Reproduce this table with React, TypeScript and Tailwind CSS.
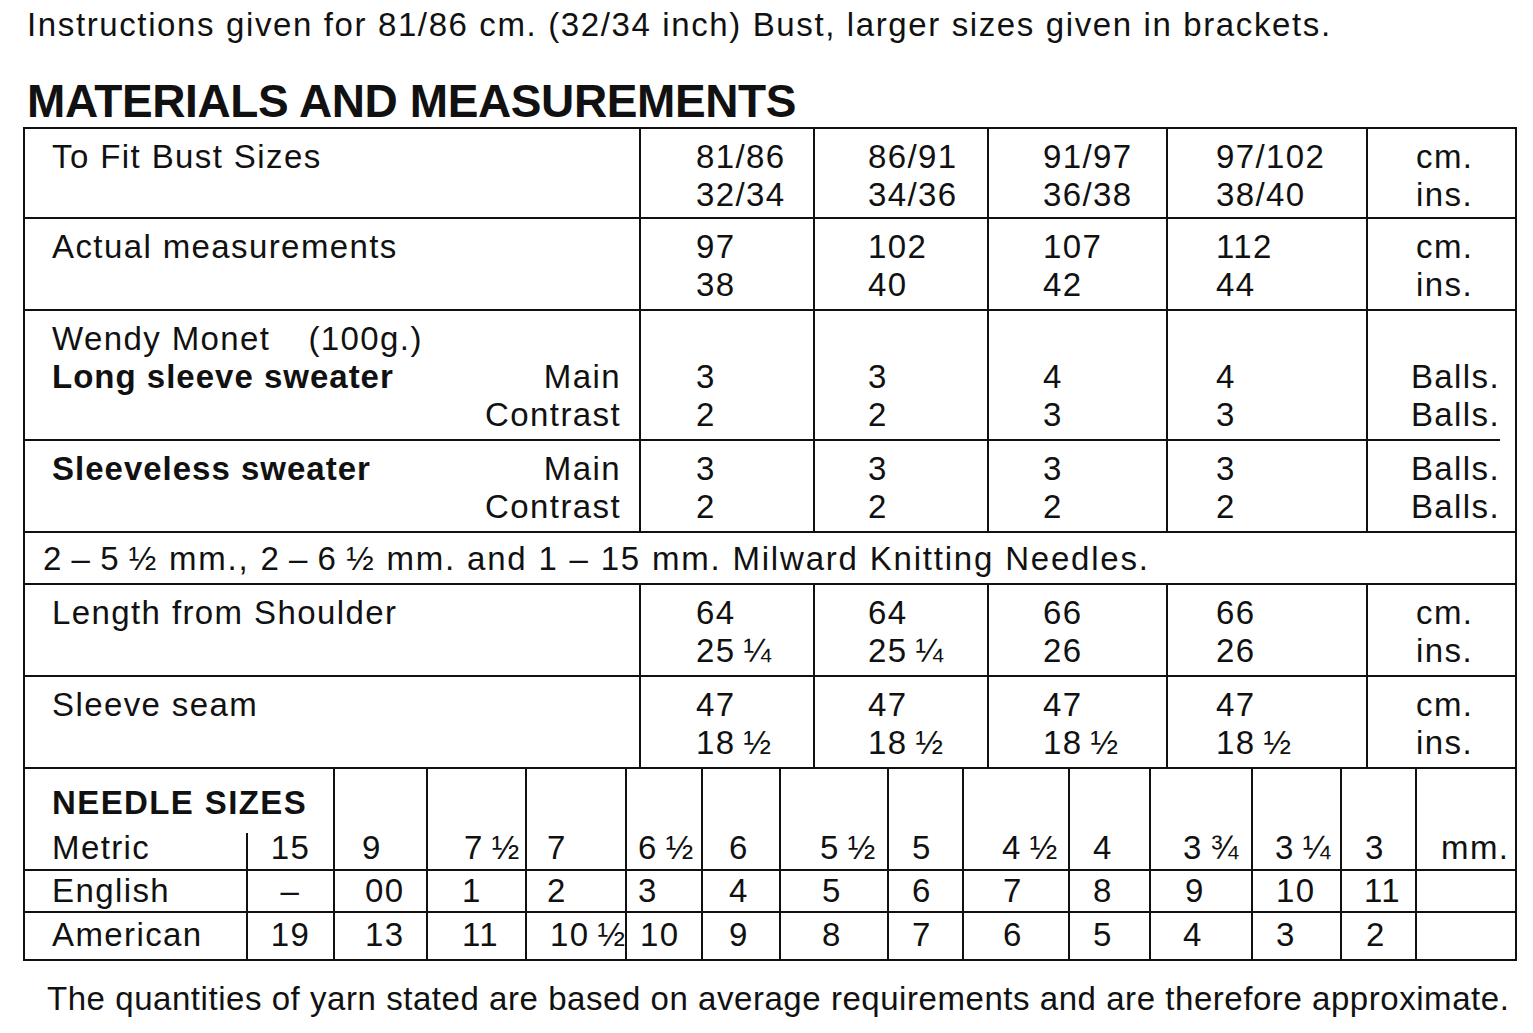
import React from "react";

const sizePl = ["pl-[55px]", "pl-[53px]", "pl-[54px]", "pl-[48px]"];

function MeasureRow({
  label,
  vals,
  h,
}: {
  label: string;
  vals: [string, string][];
  h: string;
}) {
  return (
    <div className={`grid grid-cols-[616px_174px_174px_179px_200px_1fr] border-b-2 border-[#111] ${h}`}>
      <div className="border-r-2 border-[#111] pt-[9px] pl-[27px]">{label}</div>
      {vals.map((v, i) => (
        <div key={i} className={`border-r-2 border-[#111] pt-[9px] ${sizePl[i]}`}>
          <div>{v[0]}</div>
          <div>{v[1]}</div>
        </div>
      ))}
      <div className="pt-[9px] pl-[48px]">
        <div>cm.</div>
        <div>ins.</div>
      </div>
    </div>
  );
}

type Cell = { t: string; c: string };

const metric: Cell[] = [
  { t: "9", c: "pl-[27px]" },
  { t: "7\u2009½", c: "pl-[36px]" },
  { t: "7", c: "pl-[20px]" },
  { t: "6\u2009½", c: "pl-[11px]" },
  { t: "6", c: "pl-[26px]" },
  { t: "5\u2009½", c: "pl-[39px]" },
  { t: "5", c: "pl-[23px]" },
  { t: "4\u2009½", c: "pl-[38px]" },
  { t: "4", c: "pl-[23px]" },
  { t: "3\u2009¾", c: "pl-[32px]" },
  { t: "3\u2009¼", c: "pl-[22px]" },
  { t: "3", c: "pl-[23px]" },
  { t: "mm.", c: "pl-[24px]" },
];

const english: Cell[] = [
  { t: "00", c: "pl-[30px]" },
  { t: "1", c: "pl-[34px]" },
  { t: "2", c: "pl-[20px]" },
  { t: "3", c: "pl-[11px]" },
  { t: "4", c: "pl-[26px]" },
  { t: "5", c: "pl-[41px]" },
  { t: "6", c: "pl-[23px]" },
  { t: "7", c: "pl-[39px]" },
  { t: "8", c: "pl-[23px]" },
  { t: "9", c: "pl-[34px]" },
  { t: "10", c: "pl-[23px]" },
  { t: "11", c: "pl-[22px]" },
  { t: "", c: "pl-[24px]" },
];

const american: Cell[] = [
  { t: "13", c: "pl-[30px]" },
  { t: "11", c: "pl-[34px]" },
  { t: "10\u2009½", c: "pl-[23px]" },
  { t: "10", c: "pl-[13px]" },
  { t: "9", c: "pl-[26px]" },
  { t: "8", c: "pl-[41px]" },
  { t: "7", c: "pl-[23px]" },
  { t: "6", c: "pl-[39px]" },
  { t: "5", c: "pl-[23px]" },
  { t: "4", c: "pl-[32px]" },
  { t: "3", c: "pl-[23px]" },
  { t: "2", c: "pl-[24px]" },
  { t: "", c: "pl-[24px]" },
];

export default function App() {
  return (
    <div className="min-h-[1033px] w-[1533px] bg-white text-[#111] font-['Liberation_Sans',Arial,Helvetica,sans-serif]">
      <p className="pt-[6px] pl-[27px] text-[33px] leading-[38px] tracking-[1.62px] whitespace-nowrap">
        Instructions given for 81/86 cm. (32/34 inch) Bust, larger sizes given in brackets.
      </p>
      <h1 className="mt-[32px] pl-[27px] text-[46px] leading-[50px] font-bold tracking-[-0.4px] whitespace-nowrap">
        MATERIALS AND MEASUREMENTS
      </h1>

      <div className="mt-[1px] ml-[23px] w-[1494px] border-2 border-[#111] text-[33px] leading-[38px] tracking-[1.4px] whitespace-nowrap">
        <MeasureRow
          label="To Fit Bust Sizes"
          h="h-[90px]"
          vals={[
            ["81/86", "32/34"],
            ["86/91", "34/36"],
            ["91/97", "36/38"],
            ["97/102", "38/40"],
          ]}
        />
        <MeasureRow
          label="Actual measurements"
          h="h-[92px]"
          vals={[
            ["97", "38"],
            ["102", "40"],
            ["107", "42"],
            ["112", "44"],
          ]}
        />

        {/* Wendy Monet / Long sleeve */}
        <div className="grid h-[130px] grid-cols-[616px_174px_174px_179px_200px_1fr]">
          <div className="border-r-2 border-b-2 border-[#111] pt-[9px] pl-[27px] pr-[18px]">
            <div>
              Wendy Monet<span className="ml-[38px]">(100g.)</span>
            </div>
            <div className="flex justify-between">
              <span className="font-bold tracking-[1px]">Long sleeve sweater</span>
              <span>Main</span>
            </div>
            <div className="text-right">Contrast</div>
          </div>
          {[
            ["3", "2"],
            ["3", "2"],
            ["4", "3"],
            ["4", "3"],
          ].map((v, i) => (
            <div key={i} className={`border-r-2 border-b-2 border-[#111] pt-[47px] ${sizePl[i]}`}>
              <div>{v[0]}</div>
              <div>{v[1]}</div>
            </div>
          ))}
          <div className="flex flex-col">
            <div className="pt-[47px] pr-[15px] text-right">
              <div>Balls.</div>
              <div>Balls.</div>
            </div>
            <div className="mt-auto mr-[15px] h-[2px] bg-[#111]" />
          </div>
        </div>

        {/* Sleeveless */}
        <div className="grid h-[92px] grid-cols-[616px_174px_174px_179px_200px_1fr] border-b-2 border-[#111]">
          <div className="border-r-2 border-[#111] pt-[9px] pl-[27px] pr-[18px]">
            <div className="flex justify-between">
              <span className="font-bold tracking-[1px]">Sleeveless sweater</span>
              <span>Main</span>
            </div>
            <div className="text-right">Contrast</div>
          </div>
          {[
            ["3", "2"],
            ["3", "2"],
            ["3", "2"],
            ["3", "2"],
          ].map((v, i) => (
            <div key={i} className={`border-r-2 border-[#111] pt-[9px] ${sizePl[i]}`}>
              <div>{v[0]}</div>
              <div>{v[1]}</div>
            </div>
          ))}
          <div className="pt-[9px] pr-[15px] text-right">
            <div>Balls.</div>
            <div>Balls.</div>
          </div>
        </div>

        {/* Needles text */}
        <div className="h-[52px] border-b-2 border-[#111] pt-[7px] pl-[18px] tracking-[1.8px]">
          2{"\u2009–\u2009"}5{"\u2009"}½ mm., 2{"\u2009–\u2009"}6{"\u2009"}½ mm. and 1 – 15 mm. Milward Knitting Needles.
        </div>

        <MeasureRow
          label="Length from Shoulder"
          h="h-[92px]"
          vals={[
            ["64", "25\u2009¼"],
            ["64", "25\u2009¼"],
            ["66", "26"],
            ["66", "26"],
          ]}
        />
        <MeasureRow
          label="Sleeve seam"
          h="h-[92px]"
          vals={[
            ["47", "18\u2009½"],
            ["47", "18\u2009½"],
            ["47", "18\u2009½"],
            ["47", "18\u2009½"],
          ]}
        />

        {/* Needle sizes */}
        <div className="grid grid-cols-[223px_87px_93px_99px_100px_76px_78px_108px_75px_106px_81px_102px_89px_75px_1fr] grid-rows-[64px_38px_42px_46px] leading-[34px]">
          <div className="col-span-2 col-start-1 row-start-1 border-r-2 border-[#111] pt-[15px] pl-[27px] font-bold leading-[38px]">
            NEEDLE SIZES
          </div>
          {metric.map((m, i) => (
            <div
              key={"m" + i}
              className={`row-span-2 row-start-1 flex items-end border-b-2 border-[#111] pb-[4px] ${m.c} ${
                i < metric.length - 1 ? "border-r-2" : ""
              }`}
            >
              {m.t}
            </div>
          ))}
          <div className="col-start-1 row-start-2 flex items-end border-r-2 border-b-2 border-[#111] pb-[4px] pl-[27px]">
            Metric
          </div>
          <div className="col-start-2 row-start-2 flex items-end justify-center border-r-2 border-b-2 border-[#111] pb-[4px]">
            15
          </div>

          <div className="col-start-1 row-start-3 flex items-end border-r-2 border-b-2 border-[#111] pb-[3px] pl-[27px]">
            English
          </div>
          <div className="col-start-2 row-start-3 flex items-end justify-center border-r-2 border-b-2 border-[#111] pb-[3px]">
            –
          </div>
          {english.map((m, i) => (
            <div
              key={"e" + i}
              className={`row-start-3 flex items-end border-b-2 border-[#111] pb-[3px] ${m.c} ${
                i < english.length - 1 ? "border-r-2" : ""
              }`}
            >
              {m.t}
            </div>
          ))}

          <div className="col-start-1 row-start-4 flex items-end border-r-2 border-[#111] pb-[7px] pl-[27px]">
            American
          </div>
          <div className="col-start-2 row-start-4 flex items-end justify-center border-r-2 border-[#111] pb-[7px]">
            19
          </div>
          {american.map((m, i) => (
            <div
              key={"a" + i}
              className={`row-start-4 flex items-end border-[#111] pb-[7px] ${m.c} ${
                i < american.length - 1 ? "border-r-2" : ""
              }`}
            >
              {m.t}
            </div>
          ))}
        </div>
      </div>

      <p className="mt-[19px] pl-[47px] text-[33px] leading-[38px] tracking-[0.55px] whitespace-nowrap">
        The quantities of yarn stated are based on average requirements and are therefore approximate.
      </p>
    </div>
  );
}
